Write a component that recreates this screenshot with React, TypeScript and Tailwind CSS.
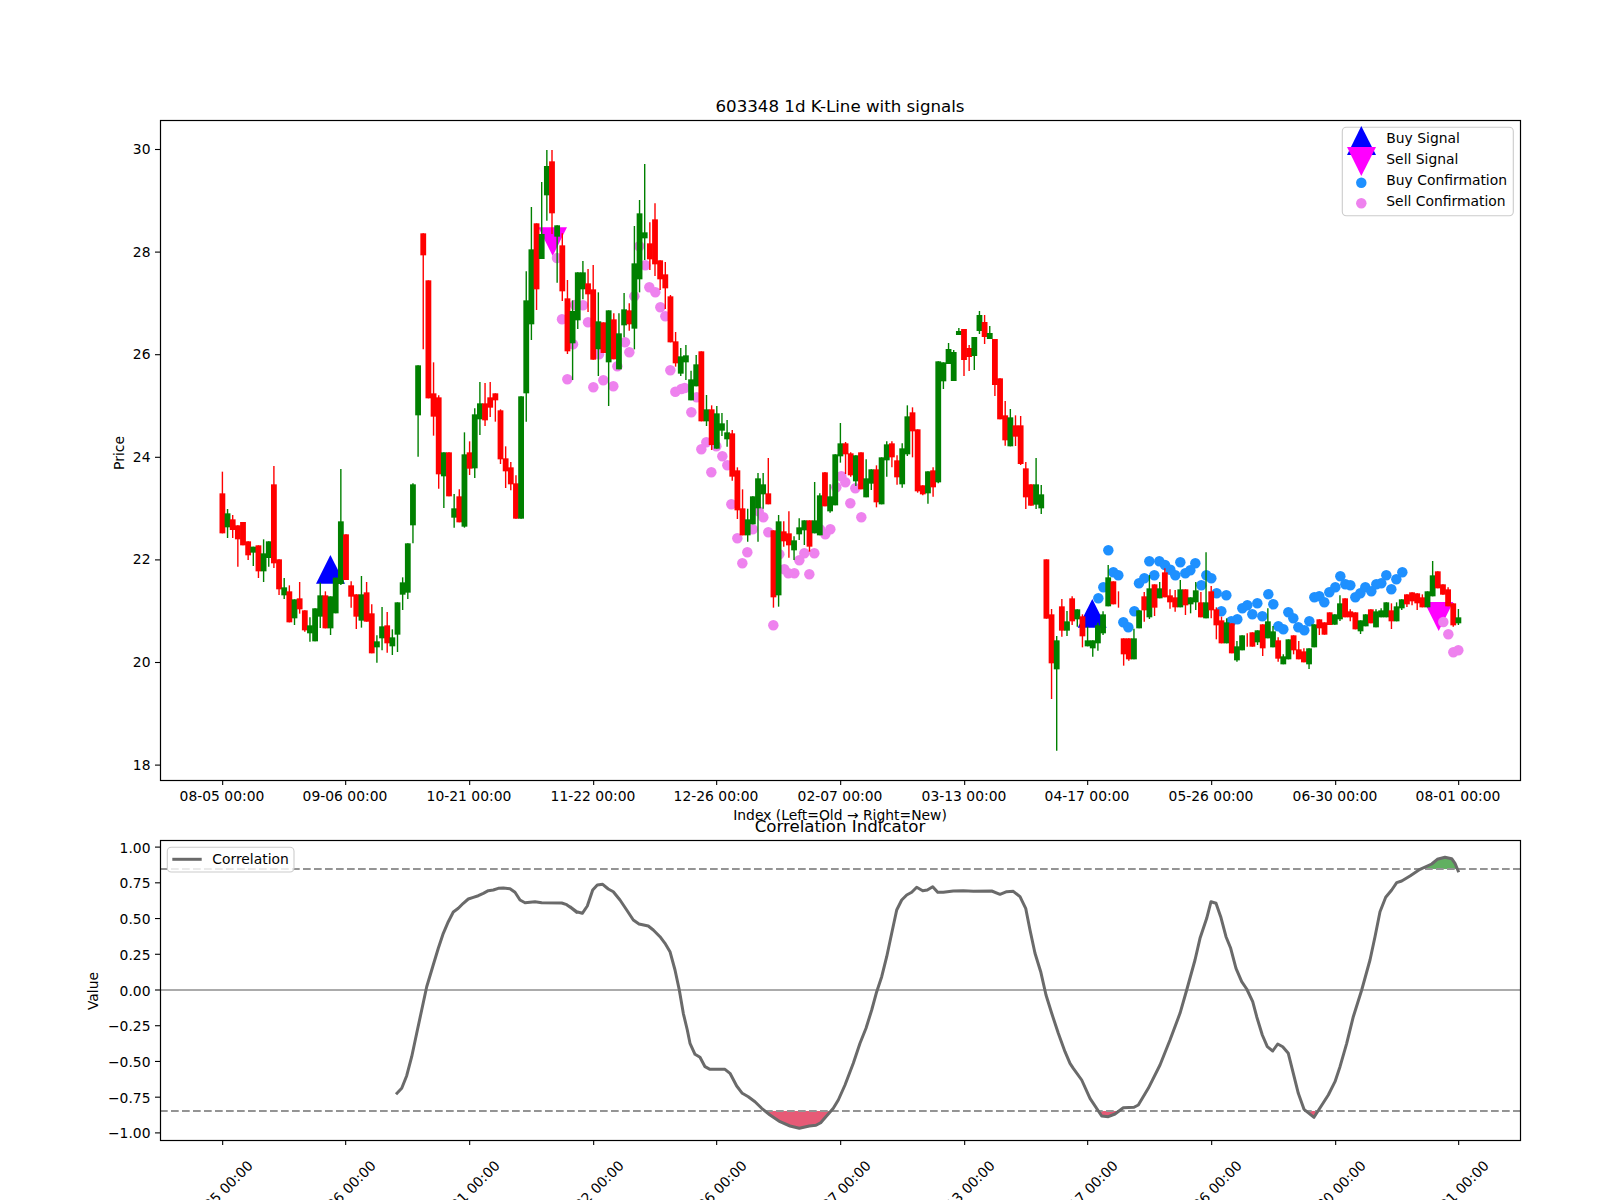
import React from "react";

type Row = number[];
const seg = (oy: number, rows: Row[]) => rows.map(([c, a, b, d, e]) => [c, oy + a / 3, oy + b / 3, oy + d / 3, oy + e / 3]);
const real = (rows: Row[]) => rows;

const candles: Row[] = [
  ...seg(400, [
    [0,215,280,400,400],[1,327,340,382,414],[0,345,358,390,414],[0,376,376,418,500],[0,366,366,436,436],
    [0,424,424,466,480],[1,440,440,458,498],[0,436,436,514,534],[1,418,460,514,546],[1,424,424,474,500],
    [0,198,253,490,504],[0,478,478,568,585],[1,534,562,586,597],[0,556,574,667,667],[1,598,598,655,675],
    [0,546,595,628,641],[0,631,631,691,695],[1,652,676,700,725],[1,625,625,724,724],[1,548,586,650,684],
    [0,574,586,685,685],[1,589,589,685,705],[1,533,533,640,640],[1,207,364,552,555],[0,403,403,540,540],
    [0,544,556,590,623],[0,583,583,650,687],[1,528,583,662,683],[0,546,577,665,665],[0,613,640,760,760],
    [1,706,724,742,788],[1,621,679,715,751],[0,636,676,730,758],[1,688,712,739,765],[1,607,607,704,756],
    [1,532,547,584,630],[1,430,430,578,597],[1,250,253,376,430],
  ]),
  ...seg(200, [
    [1,496,496,646,770],[0,100,100,166,448],[0,241,241,595,595],[0,487,580,650,707],[0,586,592,823,866],
    [1,757,757,829,924],[0,757,757,889,889],[1,882,925,953,983],[0,868,889,967,967],[1,697,763,980,983],
    [0,724,757,806,825],[1,625,643,805,834],[1,546,610,658,705],[0,549,610,661,678],[0,546,592,623,651],
    [0,580,580,601,665],[0,628,631,778,792],[0,739,775,814,864],[0,786,802,853,871],[0,826,850,956,956],
    [1,589,589,956,956],[1,214,301,580,665],[1,21,148,373,420],[0,70,70,268,330],
  ]),
  ...real([[1,182,234,259,259]]),
  ...seg(130, [[1,60,108,196,272],[0,60,94,250,312],[1,286,286,320,458],[0,310,346,484,513],[0,450,505,664,672]]),
  ...seg(200, [
    [1,301,333,430,540],[1,217,217,361,387],[1,183,217,268,298],[0,207,250,283,336],[0,195,268,479,479],
    [1,277,364,448,528],[0,367,367,459,459],[1,331,331,487,618],[0,340,358,478,478],[1,340,400,508,508],
  ]),
  ...seg(270, [[1,69,118,166,202],[0,100,121,163,182]]),
  ...seg(130, [
    [1,288,400,596,658],[1,210,250,448,487],[1,102,307,325,390],[0,277,340,388,420],[0,220,268,403,438],
    [0,391,391,448,480],[0,396,433,475,537],[0,495,499,637,637],
  ]),
  ...seg(270, [[0,186,214,280,290],[1,234,259,311,318],[1,225,256,277,330]]),
  ...seg(350, [
    [1,62,88,151,151],[1,15,43,109,109],[0,4,4,214,214],[1,135,178,214,228],[0,166,178,285,300],
    [1,168,190,296,296],[1,189,220,242,258],[1,210,247,268,290],[0,240,250,380,392],[0,352,361,481,507],
    [0,418,475,556,556],[1,476,508,556,575],[1,439,439,523,523],[1,369,385,475,575],[1,369,403,433,476],
    [0,324,430,463,463],[0,541,541,742,773],[1,495,514,736,770],[0,514,544,574,590],[0,484,550,586,623],
    [1,559,571,601,630],[1,505,532,553,570],[1,511,511,541,585],[0,511,511,590,605],[1,396,511,550,550],
    [1,430,436,556,556],[0,366,367,469,469],[1,403,439,484,488],[1,313,313,466,466],[1,219,280,319,338],
    [0,276,280,313,372],[0,307,310,376,380],[1,316,316,394,408],[0,307,307,418,418],[1,328,385,442,442],
    [1,358,358,401,420],[0,346,358,457,472],[1,322,322,463,463],[1,274,283,331,380],[0,274,280,322,352],
    [0,316,331,382,404],[1,280,295,403,413],[1,166,199,313,318],[0,172,187,244,322],[0,238,238,424,428],
    [0,406,406,433,436],[1,364,364,430,461],[0,352,361,412,440],[1,34,34,397,400],[1,37,37,94,117],
  ]),
  ...real([
    [1,343,349,364,364],[1,350,352,381,381],[1,328,331,335,335],[0,329,329,360,376],[0,345,348,357,371],
    [1,337,337,356,370],[1,311,315,331,334],[0,315,322,337,344],[1,326,333,339,339],[0,339,339,385,396],
  ]),
  ...seg(350, [
    [0,85,85,208,208],[0,153,196,271,287],[1,177,202,289,289],[0,196,226,260,288],[0,198,226,342,345],
    [0,336,355,442,477],[0,403,403,467,467],[1,324,403,464,477],[1,405,433,475,492],
  ]),
  ...seg(520, [
    [0,118,118,296,296],[0,267,283,430,537],[1,348,361,448,692],[0,237,259,332,350],[1,273,304,332,348],
    [0,229,235,304,315],[1,268,268,298,320],[0,283,289,349,382],[1,320,361,379,379],[1,361,361,385,410],
    [1,308,316,370,392],[1,274,283,340,345],[1,135,172,259,259],[0,184,184,253,253],[0,214,238,238,263],
    [0,355,355,403,437],[0,355,355,418,422],[1,326,355,418,418],[1,271,271,325,325],[0,216,229,271,305],
    [1,165,205,292,297],[0,193,193,263,288],[1,186,205,235,235],[0,145,157,232,232],[0,208,226,247,266],
    [0,210,232,262,275],[1,180,208,262,262],[0,208,208,256,285],[1,232,232,253,280],[1,186,211,247,270],
    [0,216,247,292,292],[1,97,247,295,295],[0,198,214,271,295],[0,262,268,316,358],[0,290,301,370,370],
    [1,295,307,370,370],[0,310,310,400,400],[1,363,379,421,425],[1,346,346,391,391],[0,340,360,360,380],
    [0,337,337,380,380],[1,331,331,367,375],[0,313,313,385,408],[1,265,304,355,355],[1,318,334,382,382],
    [0,352,361,416,425],[1,403,409,433,433],[1,358,358,418,418],
    [0,346,346,391,403],[0,363,388,418,418],[0,385,394,427,427],[1,385,385,433,447],[1,313,313,382,382],
    [0,298,298,325,345],[0,307,307,344,344],[0,277,277,315,315],[1,283,283,314,314],[1,226,250,298,303],
    [0,235,235,292,292],[0,268,274,292,304],[0,277,277,328,328],[1,301,301,334,342],[1,283,283,319,319],
    [0,268,268,310,310],[1,268,274,322,322],[1,265,271,292,292],[1,247,247,292,292],[0,250,271,304,327],
    [1,247,259,304,304],[1,238,238,265,270],[0,223,223,253,261],[0,217,217,244,256],[0,220,220,250,270],
    [0,223,232,262,262],[1,214,214,262,262],[1,123,166,229,229],[0,154,154,205,205],[0,193,193,224,224],
    [0,202,208,259,259],[0,250,250,316,320],[1,267,292,310,315],
  ]),
];

const pts = (ox: number, oy: number, p: number[][]) => p.map(([x, y]) => [ox + x / 3, oy + y / 3]);

const blue = [
  ...pts(1030, 520, [[235,91],[205,235],[220,202],[250,157],[265,166],[358,124],[388,124],[405,135],[421,149],[436,166],[451,127],[466,160],[481,151],[496,130],[373,166],[343,175],[327,190],[313,274],[280,307],[295,322],[514,196],[529,166],[544,175],[560,220],[589,226],[574,274],[604,304],[622,298],[637,265],[652,256],[667,283],[682,250],[697,289],[715,223],[730,253],[745,319],[760,328],[775,277]]),
  ...pts(1270, 520, [[70,295],[85,322],[103,331],[118,304],[133,232],[148,229],[163,247],[178,217],[196,202],[211,169],[226,193],[241,196],[256,232],[271,220],[286,202],[304,214],[319,193],[334,190],[349,166],[364,208],[379,178],[397,157]]),
];

const pink = [
  ...pts(1270, 520, [[520,306],[535,343],[550,397],[565,391]]),
  ...pts(680, 350, [[4,117],[14,114],[34,187],[50,142],[64,298],[79,277],[94,367],[109,289],[127,319],[142,346],[154,463],[172,565],[187,640],[202,607],[218,538],[236,484],[250,502],[265,547],[280,826],[298,613],[313,658],[325,670],[343,670],[358,631],[373,610],[388,673],[403,610],[420,538],[436,553],[451,538],[469,412],[484,379],[496,397],[511,460],[526,415],[544,502]]),
  ...pts(590, 270, [[133,79],[178,52],[196,67],[211,112],[226,139],[241,301],[256,365]]),
  ...pts(380, 200, [[531,174],[546,358],[562,538],[579,433],[609,316],[624,367],[640,562],[670,541],[700,559],[657,463],[712,499]]),
  ...pts(530, 130, [[285,637],[298,667],[328,349],[346,406],[135,525]]),
];

const corr = [
  ...pts(80, 770, [[948,973],[965,955],[980,917],[995,860],[1010,790],[1025,720],[1040,650],[1058,590],[1075,535],[1090,490],[1105,455],[1120,426],[1135,415],[1150,400],[1165,387],[1180,382],[1195,377],[1210,370],[1225,362],[1240,360],[1255,355],[1270,354],[1290,356],[1305,367],[1320,390],[1335,398],[1365,395],[1385,398],[1445,399],[1460,404],[1475,415],[1490,427]]),
  ...pts(570, 840, [[0,200],[20,215],[37,220],[52,198],[68,150],[82,135],[98,133],[115,147],[130,155],[150,180],[170,210],[190,240],[207,252],[235,258],[250,270],[270,290],[285,310],[300,335],[315,390],[328,450],[340,520],[352,570],[360,610],[375,643],[390,652],[405,680],[420,688],[465,688],[480,700],[500,738],[517,760],[535,770],[555,785],[575,805],[600,825],[630,845],[660,858],[688,865],[718,858],[738,856],[752,848],[790,805],[805,780],[825,735],[850,670],[870,610],[888,565],[905,510],[920,455],[935,410],[950,350],[965,280],[980,210],[995,180],[1010,165],[1025,157],[1040,142],[1058,152],[1072,150],[1088,140],[1103,157],[1120,157],[1150,153],[1180,152],[1210,154],[1265,153],[1290,163],[1310,155],[1330,154],[1350,170],[1367,205],[1380,270],[1395,340],[1412,395],[1428,465],[1445,520],[1465,580],[1485,635]]),
  ...pts(1060, 840, [[30,670],[40,685],[65,720],[90,775],[125,828],[145,830],[165,822],[190,803],[222,802],[235,795],[265,745],[300,675],[330,600],[360,520],[380,450],[405,360],[420,295],[440,235],[453,185],[468,190],[482,230],[498,290],[512,325],[528,385],[545,425],[560,447],[578,485],[590,530],[607,585],[622,620],[638,633],[653,612],[668,620],[685,640],[700,700],[715,760],[732,808],[762,832],[805,765],[825,725],[840,680],[860,610],[880,530],[905,450],[930,360],[945,290],[960,215],[977,172],[995,150],[1010,128],[1025,123],[1050,108],[1080,88],[1115,72],[1132,58],[1155,52],[1175,56],[1185,70],[1196,97]]),
];

const poly = (p: number[][]) => p.map(([x, y]) => `${x.toFixed(1)},${y.toFixed(1)}`).join(" ");

const redFills = [
  pts(570, 840, [[590,813],[600,825],[630,845],[660,858],[688,865],[718,858],[738,856],[752,848],[780,813]]),
  pts(1060, 840, [[118,813],[125,828],[145,830],[165,822],[178,813]]),
  pts(1060, 840, [[732,813],[762,832],[772,813]]),
];
const greenFill = pts(1060, 840, [[1088,87],[1115,72],[1132,58],[1155,52],[1175,56],[1185,70],[1190,87]]);

const tickX = [222.67, 345.67, 469.67, 593.67, 716.67, 840.67, 964.67, 1087.67, 1211.67, 1335.67, 1458.67];
const tickLabels = ["08-05 00:00", "09-06 00:00", "10-21 00:00", "11-22 00:00", "12-26 00:00", "02-07 00:00", "03-13 00:00", "04-17 00:00", "05-26 00:00", "06-30 00:00", "08-01 00:00"];
const priceTicks = [30, 28, 26, 24, 22, 20, 18];
const priceY = (p: number) => 149.5 + (30 - p) * 51.3;
const valueTicks = [1, 0.75, 0.5, 0.25, 0, -0.25, -0.5, -0.75, -1];
const valueY = (v: number) => 990 - 142.9 * v;
const fmt = (v: number) => (v < 0 ? "\u2212" : "") + Math.abs(v).toFixed(2);

const TXT = 13.89;

function PricePanel() {
  return (
    <svg className="block overflow-visible w-[1600px] h-[820px]" viewBox="0 0 1600 820">
      <text x={840} y={112} fontSize={16.67} textAnchor="middle" fill="#000">603348 1d K-Line with signals</text>

      <polygon points="316,583.7 345,583.7 330.4,555" fill="#0000ff" />
      <polygon points="1077.7,627.7 1106.7,627.7 1092.3,599" fill="#0000ff" />
      <polygon points="538.3,227.3 567,227.3 552.7,256" fill="#ff00ff" />
      <polygon points="1424.3,602 1453.3,602 1438.7,631" fill="#ff00ff" />

      {blue.map(([x, y], i) => <circle key={i} cx={x} cy={y} r={5.25} fill="#1e90ff" />)}
      {pink.map(([x, y], i) => <circle key={i} cx={x} cy={y} r={5.25} fill="#ee82ee" />)}

      {candles.map(([c, wt, bt, bb, wb], i) => {
        const x = 222 + 5.15 * i;
        const col = c ? "#008000" : "#ff0000";
        return (
          <g key={i}>
            <line x1={x + 0.4} x2={x + 0.4} y1={wt} y2={wb} stroke={col} strokeWidth={1.4} />
            {bb > bt && <rect x={x - 2.5} y={bt} width={5.8} height={bb - bt} fill={col} />}
          </g>
        );
      })}

      <rect x={160.5} y={120.5} width={1360} height={660} fill="none" stroke="#000" strokeWidth={1.2} />

      {priceTicks.map((p) => (
        <g key={p}>
          <line x1={155} x2={160} y1={priceY(p)} y2={priceY(p)} stroke="#000" strokeWidth={1.1} />
          <text x={150.5} y={priceY(p) + 4.5} fontSize={TXT} textAnchor="end" fill="#000">{p}</text>
        </g>
      ))}
      {tickX.map((x, i) => (
        <g key={x}>
          <line x1={x} x2={x} y1={780} y2={785} stroke="#000" strokeWidth={1.1} />
          <text x={x - 0.7} y={801} fontSize={TXT} textAnchor="middle" fill="#000">{tickLabels[i]}</text>
        </g>
      ))}
      <text x={840} y={820} fontSize={TXT} textAnchor="middle" fill="#000">Index (Left=Old → Right=New)</text>
      <text transform="translate(124 453) rotate(-90)" fontSize={TXT} textAnchor="middle" fill="#000">Price</text>

      <rect x={1342.3} y={127.3} width={171} height={88.4} rx={4} fill="#ffffff" fillOpacity={0.8} stroke="#cccccc" strokeWidth={1.1} />
      <polygon points="1347,155 1376,155 1361.3,126" fill="#0000ff" />
      <polygon points="1347,147 1376,147 1361.3,176" fill="#ff00ff" />
      <circle cx={1361.3} cy={182.7} r={5.25} fill="#1e90ff" />
      <circle cx={1361.3} cy={203.3} r={5.25} fill="#ee82ee" />
      <text x={1386.3} y={143.3} fontSize={TXT} fill="#000">Buy Signal</text>
      <text x={1386.3} y={164.3} fontSize={TXT} fill="#000">Sell Signal</text>
      <text x={1386.3} y={185.3} fontSize={TXT} fill="#000">Buy Confirmation</text>
      <text x={1386.3} y={206.3} fontSize={TXT} fill="#000">Sell Confirmation</text>
    </svg>
  );
}

function CorrelationPanel() {
  return (
    <svg className="block overflow-visible w-[1600px] h-[380px]" viewBox="0 820 1600 380">
      <text x={840} y={831.7} fontSize={16.67} textAnchor="middle" fill="#000">Correlation Indicator</text>

      {redFills.map((p, i) => <polygon key={i} points={poly(p)} fill="#dc143c" fillOpacity={0.7} />)}
      <polygon points={poly(greenFill)} fill="#008000" fillOpacity={0.62} />

      <line x1={160} x2={1520} y1={990} y2={990} stroke="#ababab" strokeWidth={2.1} />
      <line x1={160} x2={1520} y1={869} y2={869} stroke="#949494" strokeWidth={2.2} strokeDasharray="7.7 3.3" />
      <line x1={160} x2={1520} y1={1111} y2={1111} stroke="#949494" strokeWidth={2.2} strokeDasharray="7.7 3.3" />

      <polyline points={poly(corr)} fill="none" stroke="#6a6a6a" strokeWidth={3} strokeLinejoin="round" />

      <rect x={160.5} y={840.5} width={1360} height={300} fill="none" stroke="#000" strokeWidth={1.2} />

      {valueTicks.map((v) => (
        <g key={v}>
          <line x1={155} x2={160} y1={valueY(v)} y2={valueY(v)} stroke="#000" strokeWidth={1.1} />
          <text x={150.5} y={valueY(v) + 5.5} fontSize={TXT} textAnchor="end" fill="#000">{fmt(v)}</text>
        </g>
      ))}
      {tickX.map((x, i) => (
        <g key={x}>
          <line x1={x} x2={x} y1={1140} y2={1145} stroke="#000" strokeWidth={1.1} />
          <text transform={`translate(${x - 2.5} 1193) rotate(-45)`} y={5} fontSize={TXT} textAnchor="middle" fill="#000">{tickLabels[i]}</text>
        </g>
      ))}
      <text transform="translate(98 991) rotate(-90)" fontSize={TXT} textAnchor="middle" fill="#000">Value</text>

      <rect x={167.3} y={847.3} width={126.7} height={24.7} rx={4} fill="#ffffff" fillOpacity={0.8} stroke="#cccccc" strokeWidth={1.1} />
      <line x1={172.3} x2={201.7} y1={859.3} y2={859.3} stroke="#6a6a6a" strokeWidth={3} />
      <text x={212.3} y={864} fontSize={TXT} fill="#000">Correlation</text>
    </svg>
  );
}

export default function App() {
  return (
    <div className="flex flex-col w-[1600px] h-[1200px] overflow-hidden bg-white font-['DejaVu_Sans',sans-serif]">
      <PricePanel />
      <CorrelationPanel />
    </div>
  );
}
